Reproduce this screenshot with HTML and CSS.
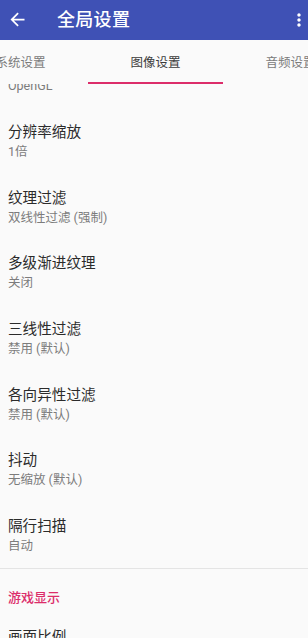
FILE: index.html
```html
<!DOCTYPE html>
<html lang="zh-CN">
<head>
    <meta charset="UTF-8">
    <meta name="viewport" content="width=device-width, initial-scale=1.0">
    <title>全局设置</title>
    <link rel="stylesheet" href="styles.css">
</head>
<body>
    <header class="app-bar">
        <span class="app-bar-icon back">
            <svg viewBox="0 0 24 24" width="21" height="21"><path fill="#fff" d="M20 11H7.83l5.59-5.59L12 4l-8 8 8 8 1.41-1.41L7.83 13H20v-2z"/></svg>
        </span>
        <h1 class="app-bar-title">全局设置</h1>
        <span class="app-bar-icon menu">
            <svg viewBox="0 0 24 24" width="20" height="20"><path fill="#fff" d="M12 8c1.1 0 2-.9 2-2s-.9-2-2-2-2 .9-2 2 .9 2 2 2zm0 2c-1.1 0-2 .9-2 2s.9 2 2 2 2-.9 2-2-.9-2-2-2zm0 6c-1.1 0-2 .9-2 2s.9 2 2 2 2-.9 2-2-.9-2-2-2z"/></svg>
        </span>
    </header>

    <nav class="tab-bar">
        <div class="tab-strip">
            <div class="tab">系统设置</div>
            <div class="tab active">图像设置</div>
            <div class="tab">音频设置</div>
        </div>
    </nav>

    <main class="pref-viewport">
        <div class="pref-list">
            <div class="pref-item">
                <div class="pref-title">图形API</div>
                <div class="pref-summary">OpenGL</div>
            </div>
            <div class="pref-item">
                <div class="pref-title">分辨率缩放</div>
                <div class="pref-summary">1倍</div>
            </div>
            <div class="pref-item">
                <div class="pref-title">纹理过滤</div>
                <div class="pref-summary">双线性过滤 (强制)</div>
            </div>
            <div class="pref-item">
                <div class="pref-title">多级渐进纹理</div>
                <div class="pref-summary">关闭</div>
            </div>
            <div class="pref-item">
                <div class="pref-title">三线性过滤</div>
                <div class="pref-summary">禁用 (默认)</div>
            </div>
            <div class="pref-item">
                <div class="pref-title">各向异性过滤</div>
                <div class="pref-summary">禁用 (默认)</div>
            </div>
            <div class="pref-item">
                <div class="pref-title">抖动</div>
                <div class="pref-summary">无缩放 (默认)</div>
            </div>
            <div class="pref-item">
                <div class="pref-title">隔行扫描</div>
                <div class="pref-summary">自动</div>
            </div>

            <div class="pref-category">游戏显示</div>

            <div class="pref-item">
                <div class="pref-title">画面比例</div>
                <div class="pref-summary">自动</div>
            </div>
        </div>
    </main>
</body>
</html>
```

FILE: styles.css
```css
/* Android style preference screen */
body {
    margin: 0;
    width: 308px;
    height: 638px;
    overflow: hidden;
    background-color: #fafafa;
    font-family: Roboto, "Noto Sans CJK SC", sans-serif;
    color: #2b2b2b;
}

.app-bar {
    height: 40px;
    background-color: #3f51b5;
    display: flex;
    align-items: center;
    color: #fff;
}

.app-bar-icon {
    display: flex;
    align-items: center;
}

.app-bar-icon.back {
    margin-left: 7px;
    margin-top: -1px;
}

.app-bar-title {
    margin: 0 0 0 29px;
    font-size: 18px;
    font-weight: 500;
    line-height: 24px;
    letter-spacing: 0.3px;
    flex: 1;
}

.app-bar-icon.menu {
    margin-right: -1px;
    margin-top: -1px;
}

.tab-bar {
    height: 44px;
    overflow: hidden;
    background-color: #fafafa;
}

.tab-strip {
    display: flex;
    margin-left: -47px;
    height: 100%;
}

.tab {
    flex: 0 0 135px;
    box-sizing: border-box;
    display: flex;
    align-items: center;
    justify-content: center;
    font-size: 12.5px;
    color: #7a7a7a;
    border-bottom: 2px solid transparent;
}

.tab.active {
    color: #3a3a3a;
    border-bottom-color: #dc2d6a;
}

.pref-viewport {
    height: 554px;
    overflow: hidden;
}

.pref-list {
    margin-top: -41px;
}

.pref-item {
    height: 65.67px;
    box-sizing: border-box;
    padding: 0 8px;
    display: flex;
    flex-direction: column;
    justify-content: center;
}

.pref-title {
    font-size: 14.6px;
    line-height: 20px;
    color: #2b2b2b;
}

.pref-summary {
    font-size: 12.5px;
    line-height: 19px;
    color: #7c7c7c;
}

.pref-category {
    border-top: 1px solid #e4e4e4;
    padding: 20px 8px 6px;
    font-size: 13px;
    line-height: 18px;
    font-weight: 500;
    color: #dc2d6a;
}
```
